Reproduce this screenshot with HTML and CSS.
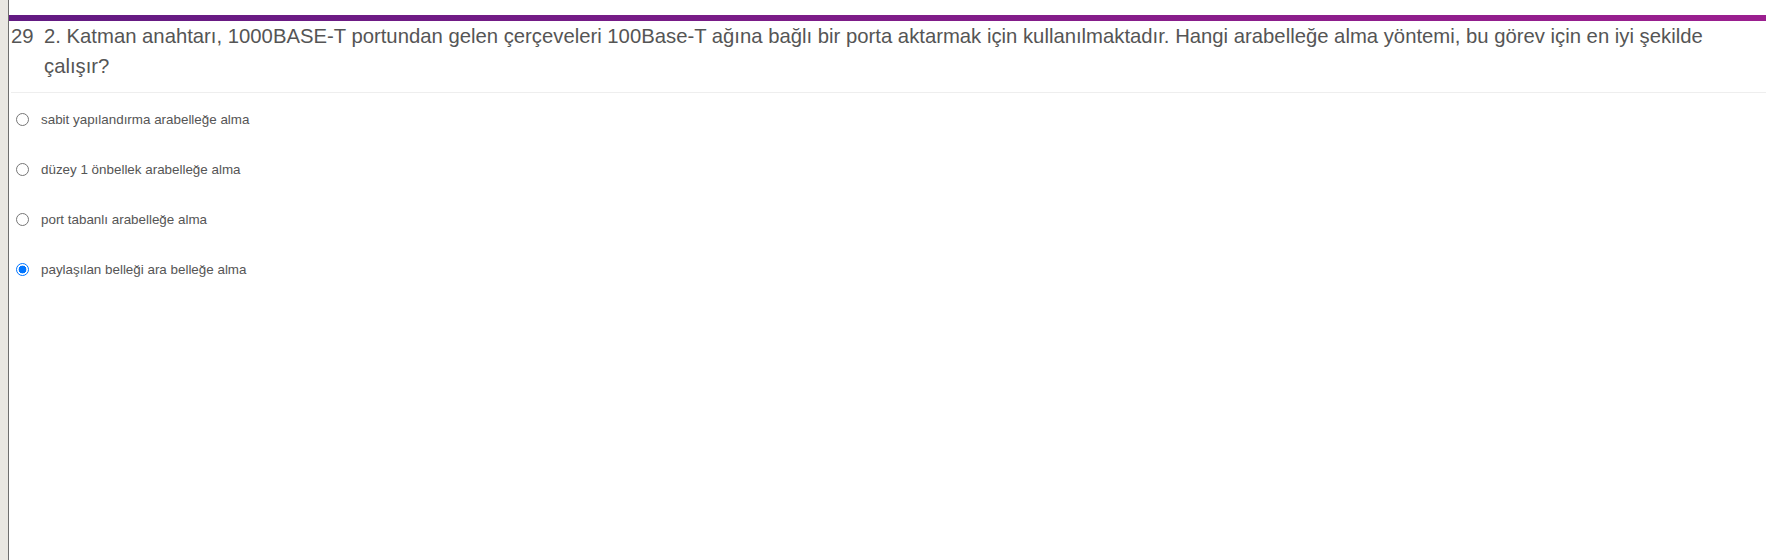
FILE: index.html
```html
<!DOCTYPE html>
<html lang="tr">
<head>
<meta charset="utf-8">
<link rel="stylesheet" href="styles.css">
</head>
<body>
<div class="frame">
  <div class="gutter"></div>
  <main class="page">
    <div class="topbar"></div>
    <div class="question">
      <span class="qnum">29</span>
      <span class="qtext">2. Katman anahtarı, 1000BASE-T portundan gelen çerçeveleri 100Base-T ağına bağlı bir porta aktarmak için kullanılmaktadır. Hangi arabelleğe alma yöntemi, bu görev için en iyi şekilde çalışır?</span>
    </div>
    <ul class="options">
      <li class="option"><span class="radio"></span><span class="label">sabit yapılandırma arabelleğe alma</span></li>
      <li class="option"><span class="radio"></span><span class="label">düzey 1 önbellek arabelleğe alma</span></li>
      <li class="option"><span class="radio"></span><span class="label">port tabanlı arabelleğe alma</span></li>
      <li class="option"><span class="radio checked"></span><span class="label">paylaşılan belleği ara belleğe alma</span></li>
    </ul>
  </main>
</div>
</body>
</html>
```
FILE: styles.css
```css
html, body {
  margin: 0;
  padding: 0;
  height: 100%;
  background: #fff;
}
body {
  font-family: "Liberation Sans", Arial, sans-serif;
  color: #555;
}
.frame {
  display: flex;
  height: 560px;
}
.gutter {
  width: 8px;
  background: #e9e7e2;
  border-right: 1px solid #6e6e6e;
  flex: none;
}
.page {
  flex: 1;
  background: #fff;
  padding-top: 15px;
}
.topbar {
  height: 6px;
  background: linear-gradient(to right, #621a82, #9b1f8f);
}
.question {
  display: flex;
  margin-left: 2px;
  padding: 0 0 11px;
  border-bottom: 1px solid #eeeeee;
  font-size: 20.3px;
  line-height: 30px;
}
.qnum {
  flex: none;
  width: 33px;
}
.qtext {
  flex: 1;
  padding-right: 28px;
}
.options {
  list-style: none;
  margin: 0;
  padding: 18px 0 0 7px;
}
.option {
  display: flex;
  align-items: center;
  height: 16px;
  margin-bottom: 34px;
  font-size: 13.4px;
}
.radio {
  flex: none;
  width: 11px;
  height: 11px;
  border: 1px solid #767676;
  border-radius: 50%;
  margin-right: 12px;
  box-sizing: content-box;
}
.radio.checked {
  border-color: #0075ff;
  background: radial-gradient(circle, #0075ff 0 3.6px, #fff 4.2px);
}
.label {
  color: #555;
}
```
